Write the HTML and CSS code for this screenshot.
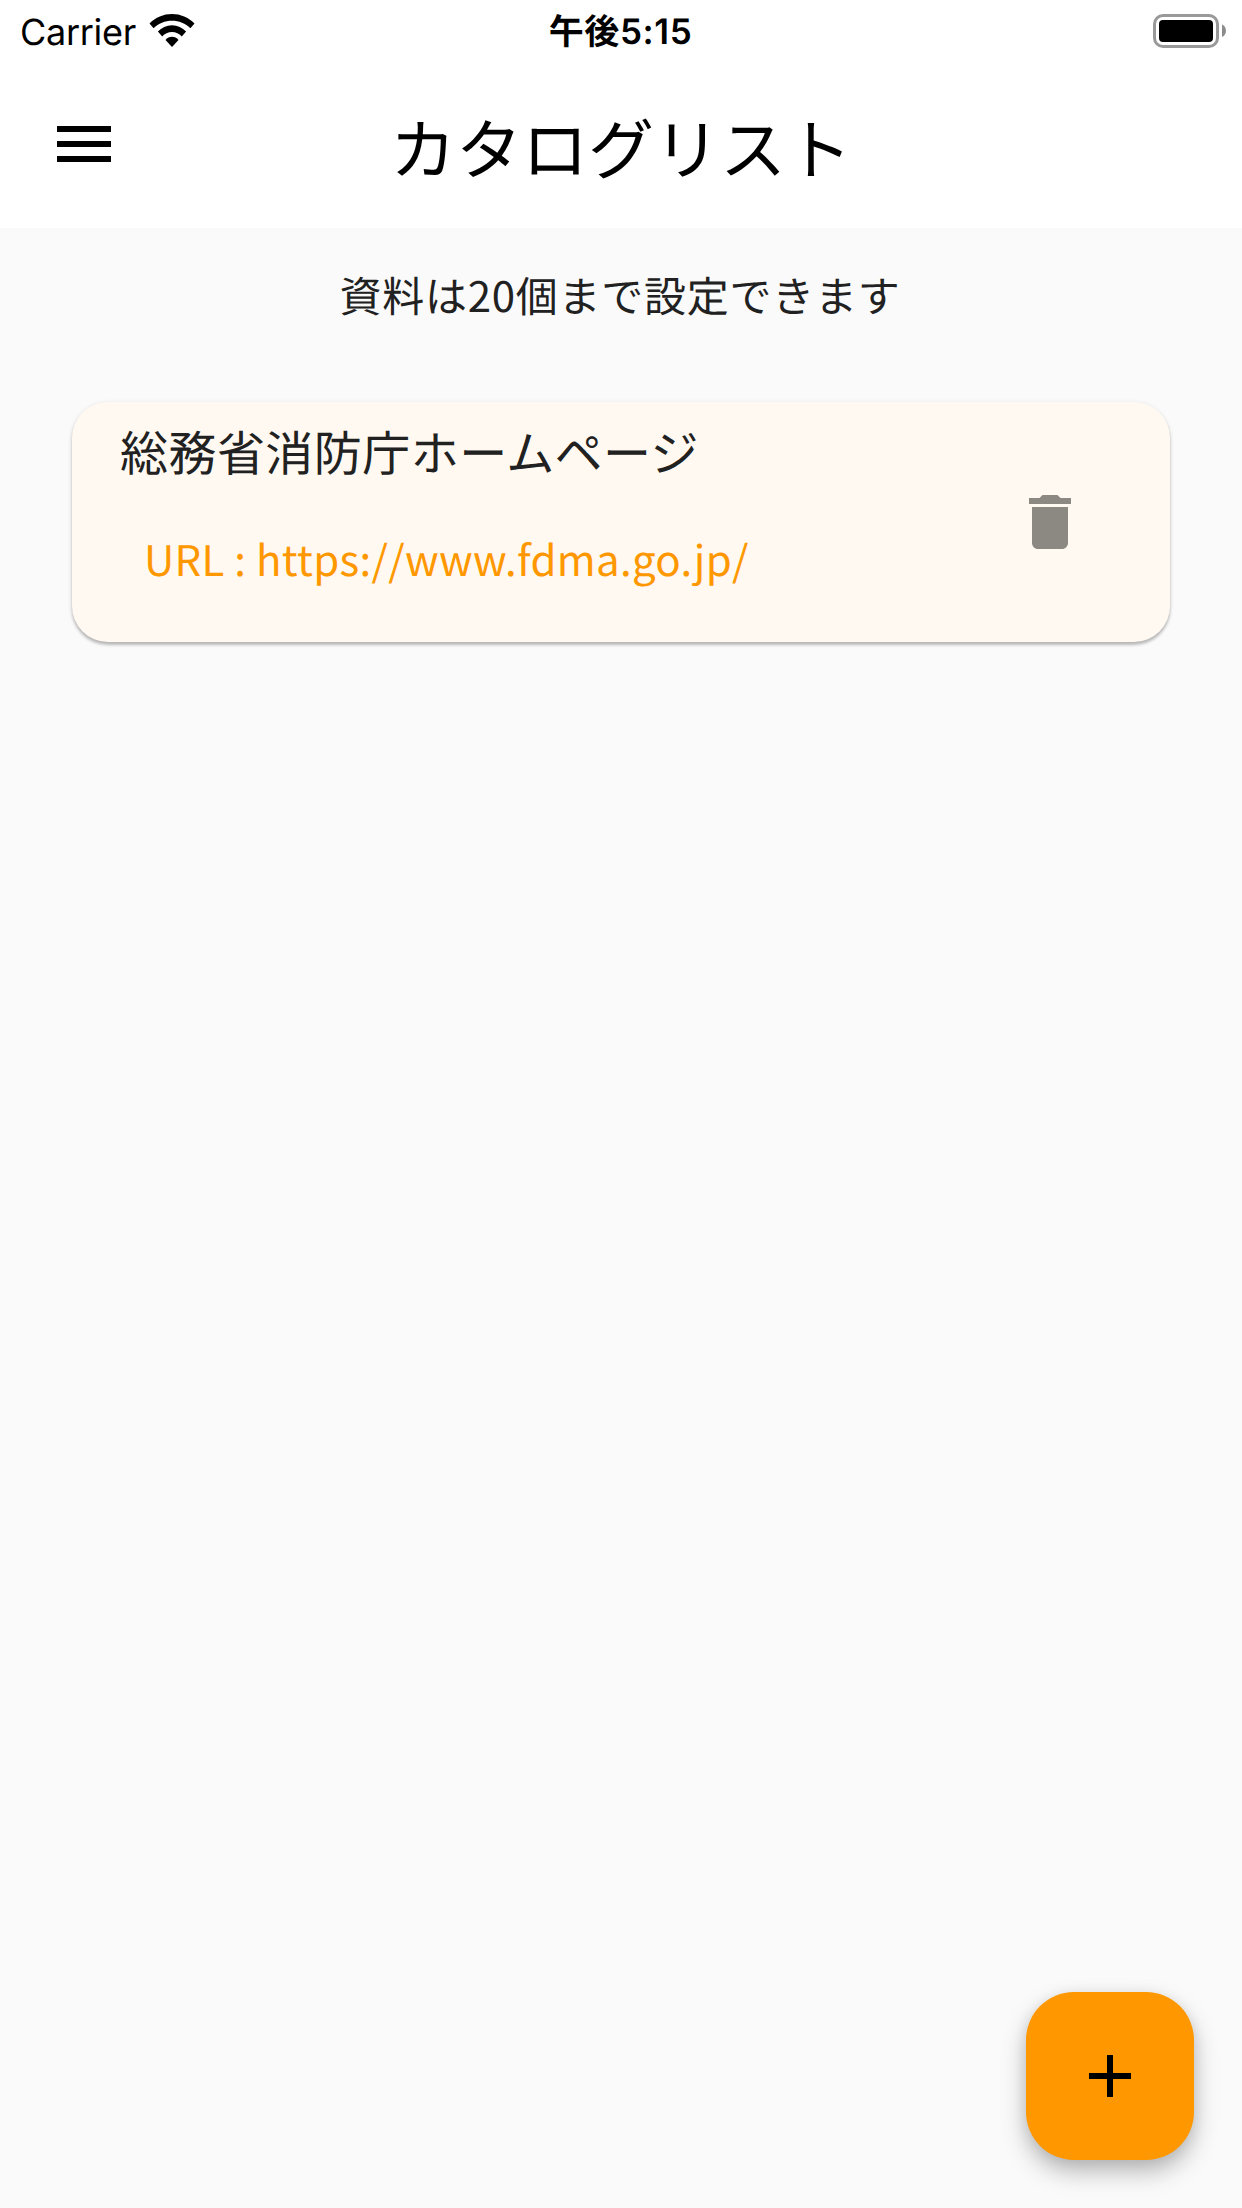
FILE: index.html
```html
<!DOCTYPE html>
<html lang="ja">
<head>
<meta charset="utf-8">
<title>カタログリスト</title>
<link rel="stylesheet" href="styles.css">
</head>
<body>
<div class="screen">
  <div class="status-bar">
    <div class="status-left">
      <span class="carrier">Carrier</span>
      <svg class="wifi" width="46" height="34" viewBox="0 0 46 34">
        <path d="M23 0C14.500 0 6.500 3.400.5 9.400L4.600 14.200C9.500 9.400 16 6.800 23 6.800S36.500 9.400 41.400 14.200L45.500 9.400C39.500 3.400 31.500 0 23 0Z"/>
        <path d="M23 11.200C17.500 11.200 12.600 13.500 8.900 17.600L13.200 22.400C15.700 19.500 19.200 17.900 23 17.900S30.300 19.500 32.800 22.400L37.100 17.600C33.400 13.500 28.500 11.200 23 11.200Z"/>
        <path d="M23 22.700C20.400 22.700 18.200 23.900 16.500 25.900L23 33L29.500 25.900C27.800 23.900 25.600 22.700 23 22.700Z"/>
      </svg>
    </div>
    <span class="clock">午後5:15</span>
    <div class="status-right">
      <svg class="battery" width="74" height="34" viewBox="0 0 74 34">
        <rect x="1.500" y="1.500" width="63" height="31" rx="8.500" fill="none" stroke="#999" stroke-width="3"/>
        <rect x="6" y="6" width="54" height="22" rx="4"/>
        <path d="M69 10.500C71.500 11.500 73 14 73 16.800S71.500 22.100 69 23.100Z" fill="#8c8c8c"/>
      </svg>
    </div>
  </div>
  <header class="app-bar">
    <button class="icon-button" aria-label="メニュー">
      <svg width="72" height="72" viewBox="0 0 24 24"><path d="M3 18h18v-2H3v2zm0-5h18v-2H3v2zm0-7v2h18V6H3z"/></svg>
    </button>
    <h1 class="title">カタログリスト</h1>
  </header>
  <main class="content">
    <p class="notice">資料は20個まで設定できます</p>
    <article class="card">
      <div class="card-text">
        <h2 class="card-title">総務省消防庁ホームページ</h2>
        <p class="card-url">URL : https://www.fdma.go.jp/</p>
      </div>
      <button class="icon-button delete" aria-label="削除">
        <svg width="72" height="72" viewBox="0 0 24 24"><path d="M6 19c0 1.100.9 2 2 2h8c1.100 0 2-.9 2-2V7H6v12zM19 4h-3.500l-1-1h-5l-1 1H5v2h14V4z"/></svg>
      </button>
    </article>
  </main>
  <button class="fab" aria-label="追加">
    <svg width="72" height="72" viewBox="0 0 24 24"><path d="M19 13h-6v6h-2v-6H5v-2h6V5h2v6h6v2z"/></svg>
  </button>
</div>
</body>
</html>
```
FILE: styles.css
```css
* {
  box-sizing: border-box;
}

body {
  margin: 0;
  font-family: "Noto Sans CJK JP", sans-serif;
  color: #212121;
  text-rendering: geometricPrecision;
}

h1, h2, p {
  margin: 0;
  font-weight: 400;
}

svg {
  display: block;
}

.screen {
  position: relative;
  display: flex;
  flex-direction: column;
  width: 1242px;
  height: 2208px;
  overflow: hidden;
  background: #fafafa;
}

.status-bar {
  display: grid;
  grid-template-columns: 1fr auto 1fr;
  align-items: center;
  height: 60px;
  padding: 0 15px 0 20px;
  background: #fff;
  color: #000;
  font-family: Inter, "Noto Sans CJK JP", sans-serif;
  font-size: 36px;
  line-height: 60px;
}

.status-left {
  display: flex;
  align-items: center;
  gap: 13px;
}

.carrier {
  width: 116px;
  padding-top: 1px;
  letter-spacing: -0.3px;
  white-space: nowrap;
}

.clock {
  padding-top: 2px;
  padding-right: 6px;
  font-size: 35px;
  font-weight: 600;
  letter-spacing: 0.6px;
}

.status-right {
  display: flex;
  justify-content: flex-end;
}

.app-bar {
  display: grid;
  grid-template-columns: 72px 1fr 72px;
  align-items: center;
  height: 168px;
  padding: 0 48px;
  background: #fff;
  color: #000;
}

.icon-button {
  padding: 0;
  border: 0;
  background: none;
}

.title {
  padding-top: 4px;
  font-size: 66px;
  line-height: 96px;
  text-align: center;
}

.content {
  display: flex;
  flex-direction: column;
  padding: 35px 72px;
}

.notice {
  height: 139px;
  padding-right: 2px;
  font-size: 42px;
  line-height: 63px;
  letter-spacing: 0.75px;
  text-align: center;
}

.card {
  display: flex;
  align-items: center;
  justify-content: space-between;
  height: 240px;
  padding: 0 84px 0 48px;
  border-radius: 36px;
  background: #fff9f2;
  box-shadow: 0 3px 3px rgba(0, 0, 0, .22), 0 1px 5px rgba(0, 0, 0, .1);
}

.card-text {
  display: flex;
  flex-direction: column;
  align-self: stretch;
  gap: 37px;
  padding-top: 12px;
}

.card-title {
  font-size: 48px;
  line-height: 72px;
  letter-spacing: 0.45px;
  white-space: nowrap;
}

.card-url {
  padding-left: 24px;
  color: #ff9800;
  font-size: 42px;
  line-height: 72px;
  letter-spacing: 0.3px;
  white-space: nowrap;
}

.delete {
  fill: #8c8882;
}

.fab {
  position: absolute;
  right: 48px;
  bottom: 48px;
  display: flex;
  align-items: center;
  justify-content: center;
  width: 168px;
  height: 168px;
  padding: 0;
  border: 0;
  border-radius: 48px;
  background: #ff9800;
  box-shadow: 0 12px 24px rgba(0, 0, 0, .26), 0 2px 14px rgba(0, 0, 0, .08);
}
```
